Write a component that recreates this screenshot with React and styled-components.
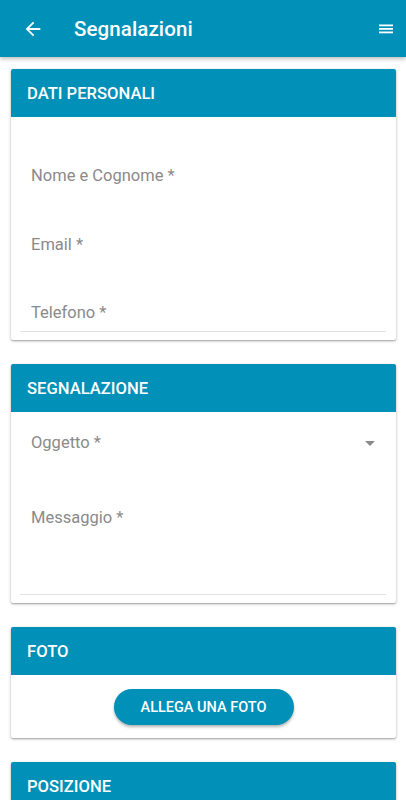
import React from "react"
import styled, { createGlobalStyle } from "styled-components"

const blue = "#0090b8"

const GlobalStyle = createGlobalStyle`
  html, body {
    margin: 0;
    padding: 0;
    background: #fff;
    font-family: Roboto, "Noto Sans", sans-serif;
  }
`

const Page = styled.div`
  width: 406px;
  height: 800px;
  overflow: hidden;
`

const AppBar = styled.header`
  height: 57px;
  background: ${blue};
  display: flex;
  align-items: center;
  padding: 0 13px 0 22px;
  box-shadow: 0 2px 4px rgba(0, 0, 0, 0.25);
  position: relative;
  z-index: 2;
`

const BarTitle = styled.h1`
  flex: 1;
  margin: 0 0 0 30px;
  color: #fff;
  font-size: 20.5px;
  font-weight: 500;
  letter-spacing: 0.1px;
`

const IconButton = styled.span`
  display: flex;
  align-items: center;
  justify-content: center;
`

const Content = styled.main`
  padding: 12px 10px 0 11px;
  display: flex;
  flex-direction: column;
  gap: 24px;
`

const Card = styled.section`
  background: #fff;
  border-radius: 2px;
  box-shadow: 0 1px 3px rgba(0, 0, 0, 0.3), 0 1px 1px rgba(0, 0, 0, 0.14);
  overflow: hidden;
`

const CardHeader = styled.div`
  height: 48px;
  background: ${blue};
  display: flex;
  align-items: center;
  padding: 0 16px;
  color: #fff;
  font-size: 16.6px;
  font-weight: 500;
`

const Fields = styled.div`
  padding: ${(p) => p.$top}px 10px 8px 9px;
`

const Field = styled.div`
  box-sizing: border-box;
  height: ${(p) => p.$h}px;
  display: flex;
  align-items: ${(p) => p.$align || "center"};
  justify-content: space-between;
  padding: ${(p) => p.$pad || "0"}px 10px ${(p) => p.$padBottom || 0}px 11px;
  color: #8a8a8a;
  font-size: 16.5px;
  line-height: 20px;
  border-bottom: ${(p) => (p.$line ? "1px solid #e2e2e2" : "none")};
`

const Caret = styled.span`
  width: 0;
  height: 0;
  margin-right: 1px;
  border-left: 5px solid transparent;
  border-right: 5px solid transparent;
  border-top: 5px solid #8a8a8a;
`

const ButtonRow = styled.div`
  display: flex;
  justify-content: center;
  padding: 14px 0 13px;
`

const PillButton = styled.button`
  width: 180px;
  height: 36px;
  border: none;
  border-radius: 18px;
  background: ${blue};
  color: #fff;
  font-family: Roboto, sans-serif;
  font-size: 14.5px;
  font-weight: 500;
  box-shadow: 0 2px 3px rgba(0, 0, 0, 0.3);
`

const App = () => (
  <Page>
    <GlobalStyle />
    <AppBar>
      <IconButton>
        <svg width="22" height="22" viewBox="0 0 24 24" fill="#fff">
          <path d="M20 11H7.83l5.59-5.59L12 4l-8 8 8 8 1.41-1.41L7.83 13H20v-2z" />
        </svg>
      </IconButton>
      <BarTitle>Segnalazioni</BarTitle>
      <IconButton>
        <svg width="14" height="10" viewBox="0 0 14 10" fill="#fff">
          <rect x="0" y="0.5" width="14" height="1.8" />
          <rect x="0" y="4" width="14" height="1.8" />
          <rect x="0" y="7.5" width="14" height="1.8" />
        </svg>
      </IconButton>
    </AppBar>

    <Content>
      <Card>
        <CardHeader>DATI PERSONALI</CardHeader>
        <Fields $top={24}>
          <Field $h={69}>Nome e Cognome *</Field>
          <Field $h={69}>Email *</Field>
          <Field $h={53} $align="flex-end" $padBottom={8} $line>
            Telefono *
          </Field>
        </Fields>
      </Card>

      <Card>
        <CardHeader>SEGNALAZIONE</CardHeader>
        <Fields $top={0}>
          <Field $h={62}>
            Oggetto *
            <Caret />
          </Field>
          <Field $h={121} $align="flex-start" $pad={34} $line>
            Messaggio *
          </Field>
        </Fields>
      </Card>

      <Card>
        <CardHeader>FOTO</CardHeader>
        <ButtonRow>
          <PillButton>ALLEGA UNA FOTO</PillButton>
        </ButtonRow>
      </Card>

      <Card>
        <CardHeader>POSIZIONE</CardHeader>
        <Fields $top={0}>
          <Field $h={60}></Field>
        </Fields>
      </Card>
    </Content>
  </Page>
)

export default App
